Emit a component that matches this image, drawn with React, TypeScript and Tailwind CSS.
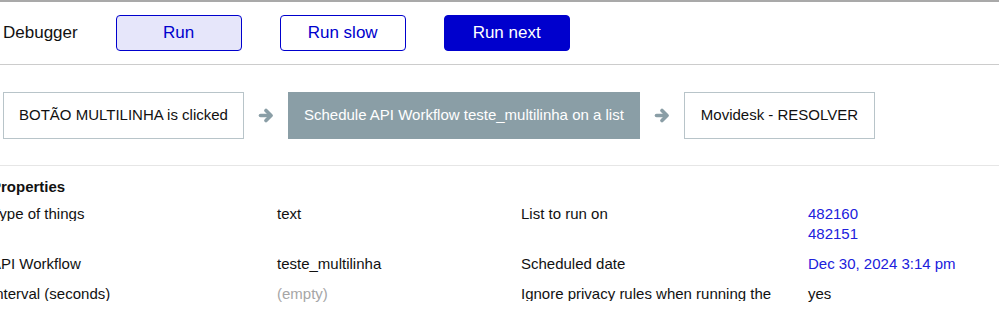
import React from "react";

const font = { fontFamily: '"Liberation Sans", Arial, sans-serif' };

const Arrow = () => (
  <svg width="16" height="15" viewBox="0 0 16 15" className="shrink-0">
    <g fill="none" stroke="#8a9ea6" strokeWidth="3.6" strokeLinecap="round" strokeLinejoin="round">
      <path d="M2.5 7.5H12.5" />
      <path d="M8 2.5L13 7.5L8 12.5" />
    </g>
  </svg>
);

type Row = {
  label1: string;
  value1: string;
  muted1?: boolean;
  label2: string;
  values2: string[];
  link2?: boolean;
};

const rows: Row[] = [
  {
    label1: "Type of things",
    value1: "text",
    label2: "List to run on",
    values2: ["482160", "482151"],
    link2: true,
  },
  {
    label1: "API Workflow",
    value1: "teste_multilinha",
    label2: "Scheduled date",
    values2: ["Dec 30, 2024 3:14 pm"],
    link2: true,
  },
  {
    label1: "Interval (seconds)",
    value1: "(empty)",
    muted1: true,
    label2: "Ignore privacy rules when running the workflow",
    values2: ["yes"],
  },
];

export default function App() {
  return (
    <div className="w-[999px] h-[326px] overflow-hidden bg-white text-[#111]" style={font}>
      {/* Debugger bar */}
      <div className="flex items-center gap-[38px] h-[65px] pl-[3px] border-t-2 border-b border-t-[#a9a9a9] border-b-[#cccccc]">
        <span className="text-[17px]">Debugger</span>
        <button className="w-[126px] h-[36px] rounded-[4px] border border-[#0000cd] bg-[#e6e6fa] text-[17px] text-[#0000cd]">
          Run
        </button>
        <button className="w-[126px] h-[36px] rounded-[4px] border border-[#0000cd] bg-white text-[17px] text-[#0000cd]">
          Run slow
        </button>
        <button className="w-[126px] h-[36px] rounded-[4px] border border-[#0000cd] bg-[#0000cd] text-[17px] text-white">
          Run next
        </button>
      </div>

      {/* Workflow steps */}
      <div className="flex items-center gap-[14px] h-[101px] pl-[3px] pt-px border-b border-[#e6e6e6] text-[15px]">
        <div className="h-[47px] flex items-center px-[15px] border border-[#b8c4c9] bg-white">
          BOTÃO MULTILINHA is clicked
        </div>
        <Arrow />
        <div className="h-[47px] flex items-center px-4 bg-[#8a9ea6] text-white">
          Schedule API Workflow teste_multilinha on a list
        </div>
        <Arrow />
        <div className="h-[47px] flex items-center px-4 border border-[#b8c4c9] bg-white">
          Movidesk - RESOLVER
        </div>
      </div>

      {/* Properties */}
      <div className="-ml-[9px] pt-[11px] text-[15px] leading-[20px]">
        <div className="font-bold">Properties</div>
        <div className="mt-[7px] flex flex-col gap-[10px]">
          {rows.map((r) => (
            <div key={r.label1} className="grid grid-cols-[286px_244px_287px_1fr]">
              <div className="h-[17px] overflow-hidden">{r.label1}</div>
              <div className={r.muted1 ? "text-[#a6a6a6]" : ""}>{r.value1}</div>
              <div className="h-[17px] overflow-hidden pr-4">{r.label2}</div>
              <div className={r.link2 ? "text-[#2020dc]" : ""}>
                {r.values2.map((v) => (
                  <div key={v}>{v}</div>
                ))}
              </div>
            </div>
          ))}
        </div>
      </div>
    </div>
  );
}
